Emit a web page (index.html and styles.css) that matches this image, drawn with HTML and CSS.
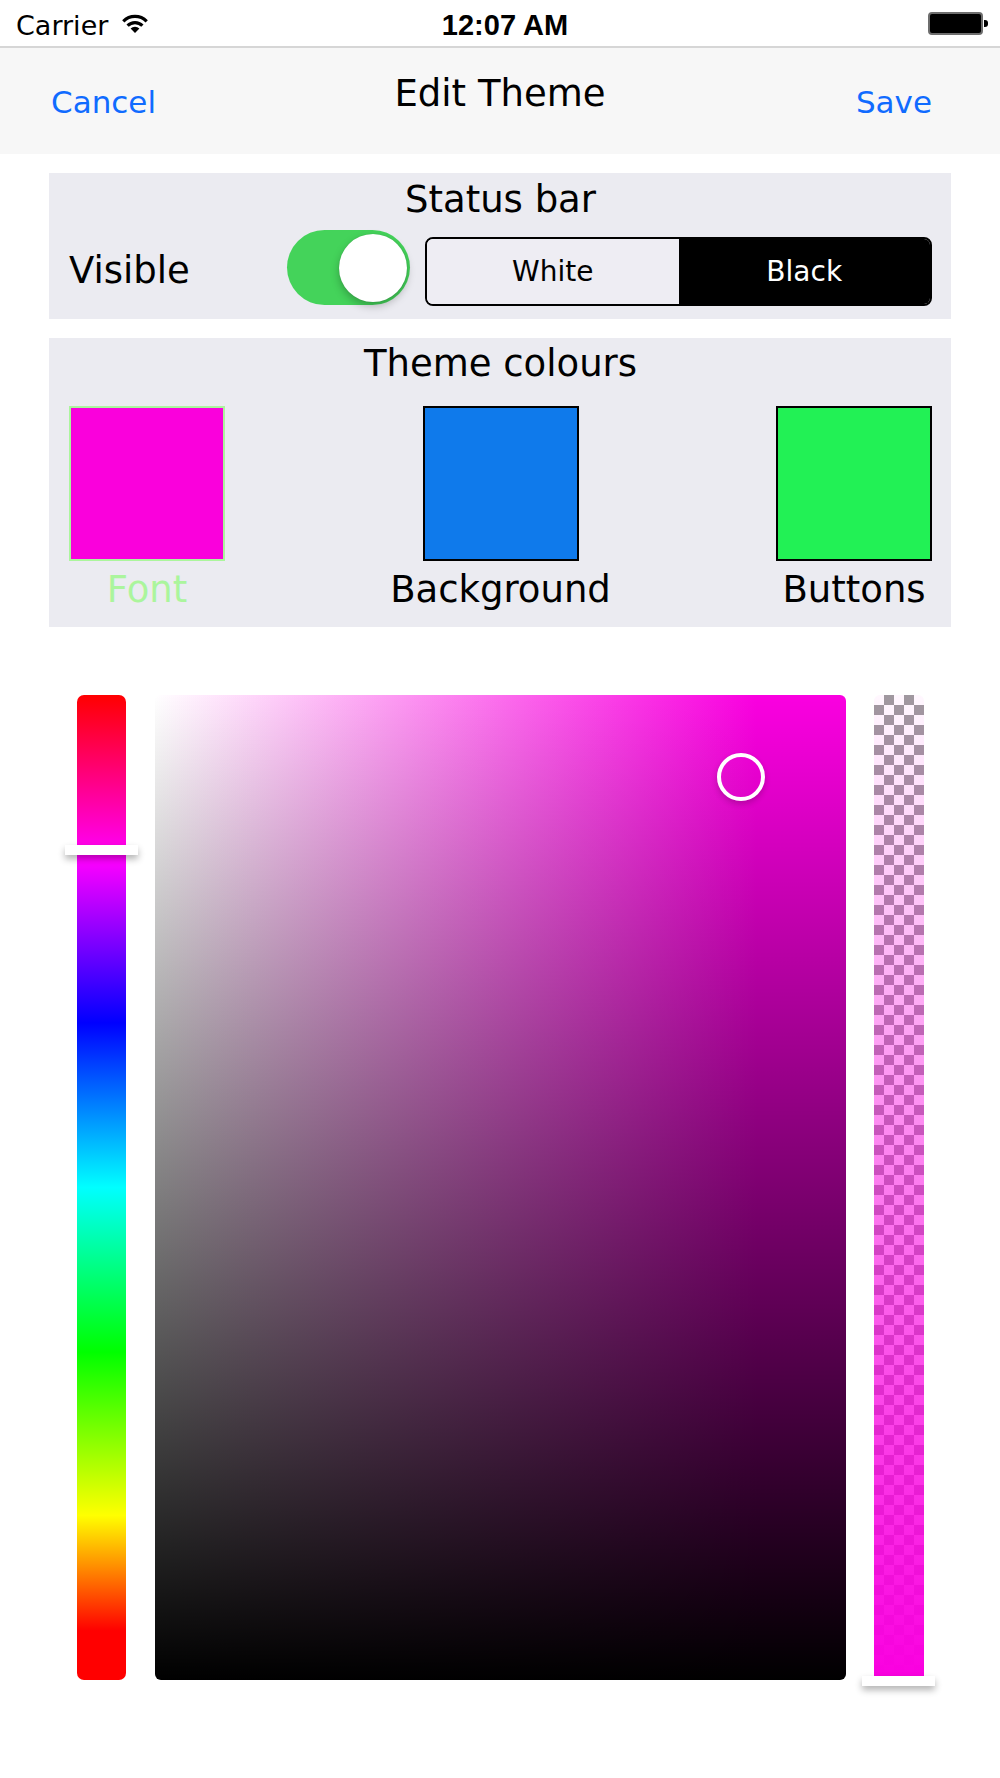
FILE: index.html
```html
<!DOCTYPE html>
<html lang="en">

<head>
    <meta charset="UTF-8">
    <meta name="viewport" content="width=device-width, initial-scale=1.0">
    <title>Edit Theme</title>
    <link rel="stylesheet" href="styles.css">
</head>

<body>

    <div class="status_bar">
        <div class="carrier">
            Carrier
            <svg class="wifi" width="30" height="21" viewBox="0 0 30 21">
                <path d="M15 20 L10.6 15.6 A6.2 6.2 0 0 1 19.4 15.6 Z" fill="#000" />
                <path d="M7.6 12.6 A10.5 10.5 0 0 1 22.4 12.6" fill="none" stroke="#000" stroke-width="3.2" />
                <path d="M3.3 8.3 A16.5 16.5 0 0 1 26.7 8.3" fill="none" stroke="#000" stroke-width="3.2" />
            </svg>
        </div>
        <div class="clock">12:07 AM</div>
        <div class="battery">
            <span class="batt_body"></span><span class="batt_nub"></span>
        </div>
    </div>

    <header class="nav_bar">
        <button class="nav_btn">Cancel</button>
        <h1 class="nav_title">Edit Theme</h1>
        <button class="nav_btn save_btn">Save</button>
    </header>

    <section class="panel status_panel">
        <h2 class="panel_title">Status bar</h2>
        <div class="status_row">
            <div class="visible_label">Visible</div>
            <div class="toggle">
                <span class="knob"></span>
            </div>
            <div class="segmented">
                <div class="seg">White</div>
                <div class="seg seg_on">Black</div>
            </div>
        </div>
    </section>

    <section class="panel colours_panel">
        <h2 class="panel_title">Theme colours</h2>
        <div class="swatch_row">
            <div class="swatch_item">
                <div class="swatch sw_font"></div>
                <div class="swatch_label lbl_font">Font</div>
            </div>
            <div class="swatch_item">
                <div class="swatch sw_bg"></div>
                <div class="swatch_label">Background</div>
            </div>
            <div class="swatch_item">
                <div class="swatch sw_btn"></div>
                <div class="swatch_label">Buttons</div>
            </div>
        </div>
    </section>

    <div class="picker">
        <div class="hue_bar">
            <span class="hue_thumb"></span>
        </div>
        <div class="sb_square">
            <span class="sb_cursor"></span>
        </div>
        <div class="alpha_bar">
            <span class="alpha_thumb"></span>
        </div>
    </div>

</body>

</html>
```

FILE: styles.css
```css
body {
    margin: 0;
    width: 1000px;
    min-height: 1778px;
    background-color: white;
    font-family: "DejaVu Sans", sans-serif;
    color: black;
}

/* status bar */

.status_bar {
    box-sizing: border-box;
    height: 48px;
    padding: 4px 12px 0 16px;
    border-bottom: 2px solid #d6d6d6;
    display: grid;
    grid-template-columns: 1fr auto 1fr;
    align-items: center;
}

.carrier {
    font-size: 27px;
    display: flex;
    align-items: center;
    gap: 12px;
}

.wifi {
    margin-top: -4px;
}

.clock {
    font-family: "Liberation Sans", sans-serif;
    font-weight: bold;
    font-size: 29px;
    padding-left: 6px;
}

.battery {
    justify-self: end;
    display: flex;
    align-items: center;
    margin-top: -4px;
}

.batt_body {
    box-sizing: border-box;
    width: 55px;
    height: 23px;
    border: 2px solid #6e6e6e;
    border-radius: 4px;
    background-color: black;
}

.batt_nub {
    width: 4px;
    height: 7px;
    margin-left: 1px;
    background-color: black;
    border-radius: 0 3px 3px 0;
}

/* nav */

.nav_bar {
    height: 106px;
    background-color: #f7f7f7;
    display: grid;
    grid-template-columns: 1fr auto 1fr;
    align-items: start;
    padding: 0 51px;
}

.nav_btn {
    border: none;
    background: none;
    padding: 0;
    font-family: "DejaVu Sans", sans-serif;
    font-size: 31px;
    line-height: 40px;
    color: #106bff;
    margin-top: 34px;
    justify-self: start;
}

.save_btn {
    justify-self: end;
    margin-right: 17px;
}

.nav_title {
    margin: 24px 0 0;
    font-size: 37px;
    line-height: 44px;
    font-weight: normal;
}

/* panels */

.panel {
    margin: 19px 49px 0;
    background-color: #ebebf1;
    padding: 5px 19px 13px 20px;
}

.panel_title {
    margin: 0;
    font-size: 37px;
    line-height: 44px;
    font-weight: normal;
    text-align: center;
}

.status_row {
    display: flex;
    align-items: center;
    height: 77px;
    margin-top: 7px;
}

.visible_label {
    width: 218px;
    font-size: 37px;
    padding-top: 5px;
}

.toggle {
    box-sizing: border-box;
    width: 123px;
    height: 75px;
    border-radius: 38px;
    background-color: #44d35a;
    display: flex;
    align-items: center;
    justify-content: flex-end;
    padding: 0 3px;
    margin-right: 15px;
}

.knob {
    width: 68px;
    height: 68px;
    border-radius: 50%;
    background-color: white;
    box-shadow: 0 4px 8px rgba(0, 0, 0, 0.25), 0 0 1px rgba(0, 0, 0, 0.2);
}

.segmented {
    box-sizing: border-box;
    align-self: flex-end;
    width: 507px;
    height: 69px;
    border: 2px solid black;
    border-radius: 8px;
    overflow: hidden;
    display: flex;
}

.seg {
    flex: 1;
    display: flex;
    align-items: center;
    justify-content: center;
    font-size: 28px;
    background-color: #eeedf3;
}

.seg_on {
    background-color: black;
    color: white;
}

.colours_panel {
    padding-top: 4px;
    padding-bottom: 15px;
}

.swatch_row {
    display: flex;
    justify-content: space-between;
    margin-top: 20px;
}

.swatch_item {
    width: 156px;
    display: flex;
    flex-direction: column;
    align-items: center;
}

.swatch {
    box-sizing: border-box;
    width: 156px;
    height: 155px;
    border: 2px solid black;
}

.sw_font {
    background-color: #fa00dc;
    border-color: #abf59d;
}

.sw_bg {
    background-color: #0f7aeb;
}

.sw_btn {
    background-color: #22f155;
}

.swatch_label {
    margin-top: 7px;
    font-size: 37px;
    line-height: 44px;
    white-space: nowrap;
}

.lbl_font {
    color: #abf59d;
}

/* colour picker */

.picker {
    display: flex;
    align-items: flex-start;
    margin-top: 68px;
    padding-left: 77px;
}

.hue_bar {
    position: relative;
    width: 49px;
    height: 985px;
    border-radius: 7px;
    background: linear-gradient(to bottom, #ff0000 0%, #ff00ff 16.7%, #0000ff 33.3%, #00ffff 50%, #00ff00 66.7%, #ffff00 83.3%, #ff0000 95%, #ff0000 100%);
}

.hue_thumb {
    position: absolute;
    left: -12px;
    top: 150px;
    width: 73px;
    height: 10px;
    background-color: white;
    box-shadow: 0 4px 7px rgba(0, 0, 0, 0.3);
}

.sb_square {
    position: relative;
    width: 691px;
    height: 985px;
    margin-left: 29px;
    border-radius: 6px;
    background:
        linear-gradient(to bottom, rgba(0, 0, 0, 0), #000),
        linear-gradient(to right, #fff, #fa00e0 87%, #fa00e0);
}

.sb_cursor {
    position: absolute;
    left: 562px;
    top: 58px;
    box-sizing: border-box;
    width: 48px;
    height: 48px;
    border: 4px solid white;
    border-radius: 50%;
    box-shadow: 0 3px 6px rgba(0, 0, 0, 0.2);
}

.alpha_bar {
    position: relative;
    width: 50px;
    height: 981px;
    margin-left: 28px;
    border-radius: 6px 6px 0 0;
    background:
        linear-gradient(to bottom, rgba(250, 0, 224, 0.03), rgba(250, 0, 224, 1)),
        repeating-conic-gradient(#9d9d9d 0 25%, #ffffff 0 50%) 0 0 / 20px 20px;
}

.alpha_thumb {
    position: absolute;
    left: -12px;
    top: 981px;
    width: 73px;
    height: 10px;
    background-color: white;
    box-shadow: 0 4px 7px rgba(0, 0, 0, 0.3);
}
```
